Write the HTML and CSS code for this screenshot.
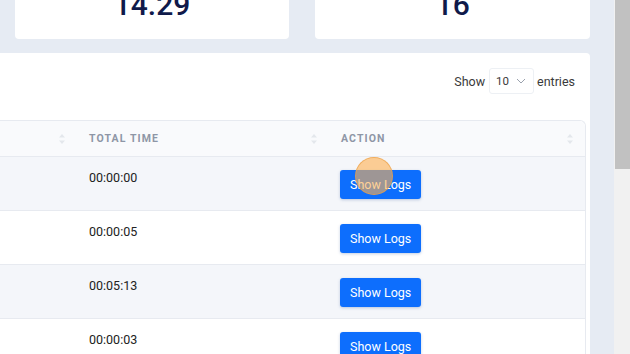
FILE: index.html
```html
<!DOCTYPE html>
<html lang="en">
<head>
<meta charset="UTF-8">
<meta name="viewport" content="width=device-width, initial-scale=1.0">
<title>Sessions</title>
<link rel="stylesheet" href="styles.css">
</head>
<body>

<div class="page">
    <main class="content">
        <div class="stats">
            <div class="stat-card"></div>
            <div class="stat-card"><span class="stat-value">14.29</span></div>
            <div class="stat-card"><span class="stat-value">16</span></div>
        </div>

        <div class="panel">
            <div class="toolbar">
                <label>Show</label>
                <span class="select">10
                    <svg width="10" height="6" viewBox="0 0 10 6"><path d="M1 1l4 4 4-4" fill="none" stroke="#9aa1ad" stroke-width="1"/></svg>
                </span>
                <label>entries</label>
            </div>

            <div class="table-wrap">
                <table>
                    <colgroup>
                        <col class="col-first">
                        <col class="col-time">
                        <col class="col-action">
                    </colgroup>
                    <thead>
                        <tr>
                            <th><div class="th-inner"><span></span><svg class="sort" width="6" height="10" viewBox="0 0 6 10"><path d="M3 0l3 3.5H0zM3 10l3-3.5H0z" fill="#e4e7ec"/></svg></div></th>
                            <th><div class="th-inner"><span>Total Time</span><svg class="sort" width="6" height="10" viewBox="0 0 6 10"><path d="M3 0l3 3.5H0zM3 10l3-3.5H0z" fill="#e4e7ec"/></svg></div></th>
                            <th><div class="th-inner"><span>Action</span><svg class="sort" width="6" height="10" viewBox="0 0 6 10"><path d="M3 0l3 3.5H0zM3 10l3-3.5H0z" fill="#e4e7ec"/></svg></div></th>
                        </tr>
                    </thead>
                    <tbody>
                        <tr class="striped">
                            <td></td>
                            <td>00:00:00</td>
                            <td class="action-cell"><button>Show Logs</button><span class="cursor-dot"></span></td>
                        </tr>
                        <tr>
                            <td></td>
                            <td>00:00:05</td>
                            <td><button>Show Logs</button></td>
                        </tr>
                        <tr class="striped">
                            <td></td>
                            <td>00:05:13</td>
                            <td><button>Show Logs</button></td>
                        </tr>
                        <tr>
                            <td></td>
                            <td>00:00:03</td>
                            <td><button>Show Logs</button></td>
                        </tr>
                    </tbody>
                </table>
            </div>
        </div>
    </main>

    <div class="scrollbar"><div class="thumb"></div></div>
</div>

</body>
</html>
```

FILE: styles.css
```css
html, body {
    margin: 0;
    padding: 0;
    height: 100%;
    overflow: hidden;
}
body {
    font-family: Roboto, "Liberation Sans", sans-serif;
    background-color: #e6ebf3;
    color: #222;
}
.page {
    display: flex;
    height: 354px;
    overflow: hidden;
}
.content {
    flex: 0 0 875px;
    margin-left: -286px;
    margin-right: 24px;
}
.stats {
    display: grid;
    grid-template-columns: repeat(3, 1fr);
    gap: 26px;
    margin-top: -61px;
}
.stat-card {
    height: 100px;
    background-color: #fff;
    border-radius: 4px;
    display: flex;
    align-items: flex-end;
    justify-content: center;
    padding-bottom: 19px;
    box-sizing: border-box;
}
.stat-value {
    font-size: 30px;
    line-height: 30px;
    font-weight: 500;
    color: #101a4a;
}
.panel {
    margin-top: 14px;
    background-color: #fff;
    border-radius: 4px;
    padding: 0 4px;
    height: 320px;
}
.toolbar {
    display: flex;
    justify-content: flex-end;
    align-items: center;
    gap: 4px;
    padding: 15px 11px 26px 0;
    font-size: 12.5px;
    color: #3a3a3a;
}
.select {
    display: flex;
    align-items: center;
    gap: 7px;
    height: 26px;
    box-sizing: border-box;
    padding: 0 7px 0 6px;
    margin-right: -1px;
    border: 1px solid #edf0f4;
    border-radius: 3px;
    font-size: 11.5px;
}
table {
    width: 100%;
    border-collapse: separate;
    border-spacing: 0;
    border: 1px solid #e7eaf0;
    border-bottom: none;
    border-radius: 6px 6px 0 0;
    table-layout: fixed;
}
.col-first { width: 358px; }
.col-time { width: 252px; }
.col-action { width: 256px; }
th {
    height: 35px;
    padding: 0 12px;
    background-color: #f9fafc;
    border-bottom: 1px solid #e7eaf0;
    text-align: left;
    font-size: 10.5px;
    font-weight: 700;
    letter-spacing: 1.1px;
    text-transform: uppercase;
    color: #8e96a6;
}
thead th:first-child { border-top-left-radius: 6px; }
thead th:last-child { border-top-right-radius: 6px; }
.th-inner {
    display: flex;
    justify-content: space-between;
    align-items: center;
}
td {
    padding: 13px 11px 11px 12px;
    vertical-align: top;
    border-bottom: 1px solid #e7eaf0;
    font-size: 12.5px;
    line-height: 16px;
    color: #222;
}
tr.striped td {
    background-color: #f4f6fa;
}
.action-cell {
    position: relative;
}
button {
    display: block;
    height: 29px;
    margin-left: -1px;
    padding: 0 10px;
    background-color: #0d6efd;
    color: #fff;
    border: none;
    border-radius: 3px;
    font-family: Roboto, "Liberation Sans", sans-serif;
    font-size: 12.5px;
    box-shadow: 0 1px 3px rgba(13, 60, 140, 0.25);
    cursor: pointer;
}
.cursor-dot {
    position: absolute;
    left: 26px;
    top: 0;
    width: 36px;
    height: 36px;
    border-radius: 50%;
    background-color: rgba(255, 176, 80, 0.6);
    border: 1px solid rgba(235, 160, 70, 0.7);
}
.scrollbar {
    flex: 0 0 17px;
    background-color: #f1f1f1;
    padding: 0 1px;
    box-sizing: border-box;
}
.thumb {
    height: 169px;
    background-color: #c1c1c1;
}
```
